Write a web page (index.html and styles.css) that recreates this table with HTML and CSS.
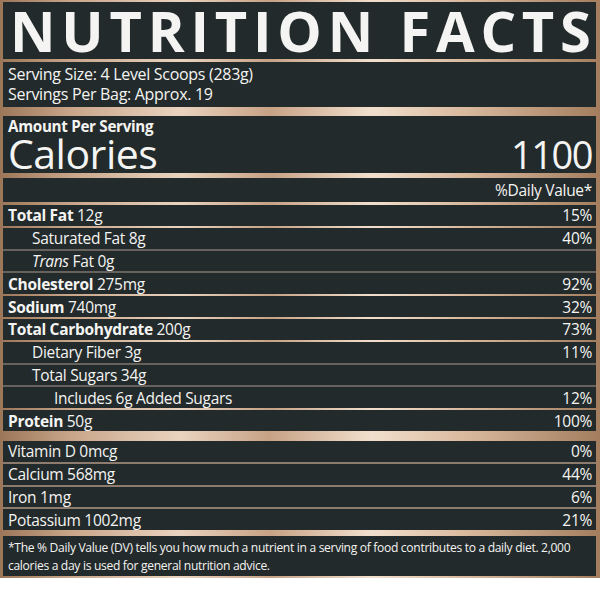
FILE: index.html
```html
<!DOCTYPE html>
<html>
<head>
<meta charset="utf-8">
<link rel="stylesheet" href="styles.css">
</head>
<body>
<div class="label">
  <div class="box title">NUTRITION FACTS</div>
  <div class="box serving">
    <div>Serving Size: 4 Level Scoops (283g)</div>
    <div>Servings Per Bag: Approx. 19</div>
  </div>
  <div class="box calories">
    <div class="amount">Amount Per Serving</div>
    <div class="cal-line"><span>Calories</span><span class="cal-num">1100</span></div>
  </div>
  <div class="box row dv"><span></span><span>%Daily Value*</span></div>
  <div class="rows">
    <div class="box row"><span><b>Total Fat</b> 12g</span><span>15%</span></div>
    <div class="box row ind1"><span>Saturated Fat 8g</span><span>40%</span></div>
    <div class="box row ind1 grey"><span><i>Trans</i> Fat 0g</span><span></span></div>
    <div class="box row grey"><span><b>Cholesterol</b> 275mg</span><span>92%</span></div>
    <div class="box row"><span><b>Sodium</b> 740mg</span><span>32%</span></div>
    <div class="box row"><span><b>Total Carbohydrate</b> 200g</span><span>73%</span></div>
    <div class="box row ind1"><span>Dietary Fiber 3g</span><span>11%</span></div>
    <div class="box row ind1 grey"><span>Total Sugars 34g</span><span></span></div>
    <div class="box row ind2 grey"><span>Includes 6g Added Sugars</span><span>12%</span></div>
    <div class="box row"><span><b>Protein</b> 50g</span><span>100%</span></div>
  </div>
  <div class="rows vit">
    <div class="box row"><span>Vitamin D 0mcg</span><span>0%</span></div>
    <div class="box row mid"><span>Calcium 568mg</span><span>44%</span></div>
    <div class="box row mid"><span>Iron 1mg</span><span>6%</span></div>
    <div class="box row mid"><span>Potassium 1002mg</span><span>21%</span></div>
  </div>
  <div class="box foot">*The % Daily Value (DV) tells you how much a nutrient in a serving of food contributes to a daily diet. 2,000 calories a day is used for general nutrition advice.</div>
</div>
</body>
</html>
```

FILE: styles.css
```css
html, body {
  margin: 0;
  padding: 0;
  background: #ffffff;
}
.label {
  width: 600px;
  box-sizing: border-box;
  padding: 2px 4px 2px 3px;
  display: flex;
  flex-direction: column;
  background: linear-gradient(90deg, #9c7658 0%, #c9a68a 12%, #e9d3bf 30%, #c7a285 45%, #f1dfcd 62%, #d8b89c 78%, #a37d5e 100%);
  font-family: "Open Sans", "Noto Sans", sans-serif;
  color: #f4f4f2;
}
.box {
  background: #232a2b;
  box-sizing: border-box;
}
.title {
  height: 57px;
  font-weight: 700;
  font-size: 56px;
  letter-spacing: 5.8px;
  line-height: 57px;
  padding: 0 0 0 7px;
  white-space: nowrap;
}
.serving {
  margin-top: 3px;
  height: 45px;
  padding: 2px 5px 0;
  font-size: 16px;
  line-height: 20px;
  letter-spacing: -0.3px;
}
.calories {
  margin-top: 9px;
  height: 57px;
  padding: 1px 4px 0 5px;
}
.amount {
  font-weight: 700;
  font-size: 15.2px;
  line-height: 18px;
  letter-spacing: -0.3px;
}
.cal-line {
  display: flex;
  justify-content: space-between;
  align-items: baseline;
  font-size: 41px;
  font-weight: 500;
  line-height: 36px;
  letter-spacing: -0.5px;
}
.cal-num {
  font-size: 38px;
  letter-spacing: -1.5px;
}
.row {
  display: flex;
  justify-content: space-between;
  align-items: center;
  height: 20.8px;
  padding: 0 4px 0 5px;
  font-size: 15.5px;
  letter-spacing: -0.3px;
  white-space: nowrap;
}
.dv {
  margin-top: 5px;
  height: 24px;
}
.rows {
  display: flex;
  flex-direction: column;
  gap: 2px;
  margin-top: 3px;
}
.rows.vit {
  margin-top: 10px;
}
.row b {
  font-weight: 700;
}
.ind1 {
  padding-left: 29px;
}
.ind2 {
  padding-left: 51px;
}
.grey {
  box-shadow: 0 -2px 0 #68625d;
}
.mid {
  box-shadow: 0 -2px 0 #8d7c6d;
}
.foot {
  margin-top: 6px;
  height: 40px;
  padding: 3px 3px 0 5px;
  font-size: 12.1px;
  line-height: 18px;
  letter-spacing: -0.32px;
}
```
